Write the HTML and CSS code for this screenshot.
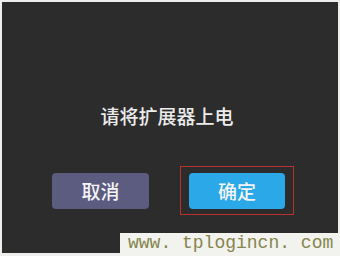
FILE: index.html
```html
<!DOCTYPE html>
<html lang="zh">
<head>
<meta charset="utf-8">
<link rel="stylesheet" href="styles.css">
</head>
<body>
<div class="panel">
  <p class="message">请将扩展器上电</p>
  <div class="actions">
    <button class="btn btn-cancel">取消</button>
    <div class="highlight">
      <button class="btn btn-ok">确定</button>
    </div>
  </div>
</div>
<div class="watermark">www. tplogincn. com</div>
</body>
</html>
```
FILE: styles.css
```css
html, body {
  margin: 0;
  padding: 0;
}
body {
  width: 340px;
  height: 256px;
  background: #eeeeec;
  padding: 2px 2px 3px 2px;
  box-sizing: border-box;
  position: relative;
  overflow: hidden;
  font-family: "Noto Sans CJK SC", "Noto Sans", sans-serif;
}
.panel {
  width: 336px;
  height: 251px;
  background: #2c2c2c;
  display: flex;
  flex-direction: column;
}
.message {
  margin: 103px 0 0 0;
  padding-right: 6px;
  text-align: center;
  color: #ececec;
  font-size: 19px;
  font-weight: 500;
  line-height: 21px;
  height: 21px;
}
.actions {
  display: flex;
  align-items: flex-start;
  margin-top: 40px;
  padding-left: 50px;
  gap: 31px;
}
.btn {
  border: none;
  border-radius: 4px;
  color: #f4f4f4;
  font-family: "Noto Sans CJK SC", "Noto Sans", sans-serif;
  font-size: 19px;
  font-weight: 500;
  line-height: 36px;
  height: 36px;
  padding: 0;
  margin: 0;
}
.btn-cancel {
  width: 97px;
  margin-top: 7px;
  background: #5c5b80;
}
.btn-ok {
  width: 96px;
  background: #2aa8e8;
  display: block;
}
.highlight {
  border: 1px solid #b8302f;
  padding: 6px 8px 5px 8px;
}
.watermark {
  position: absolute;
  left: 120px;
  top: 233px;
  width: 220px;
  height: 23px;
  background: #f2f2ee;
  color: #85854d;
  font-family: "Liberation Mono", monospace;
  font-size: 18px;
  line-height: 20px;
  padding-left: 8px;
  box-sizing: border-box;
  white-space: pre;
}
```
